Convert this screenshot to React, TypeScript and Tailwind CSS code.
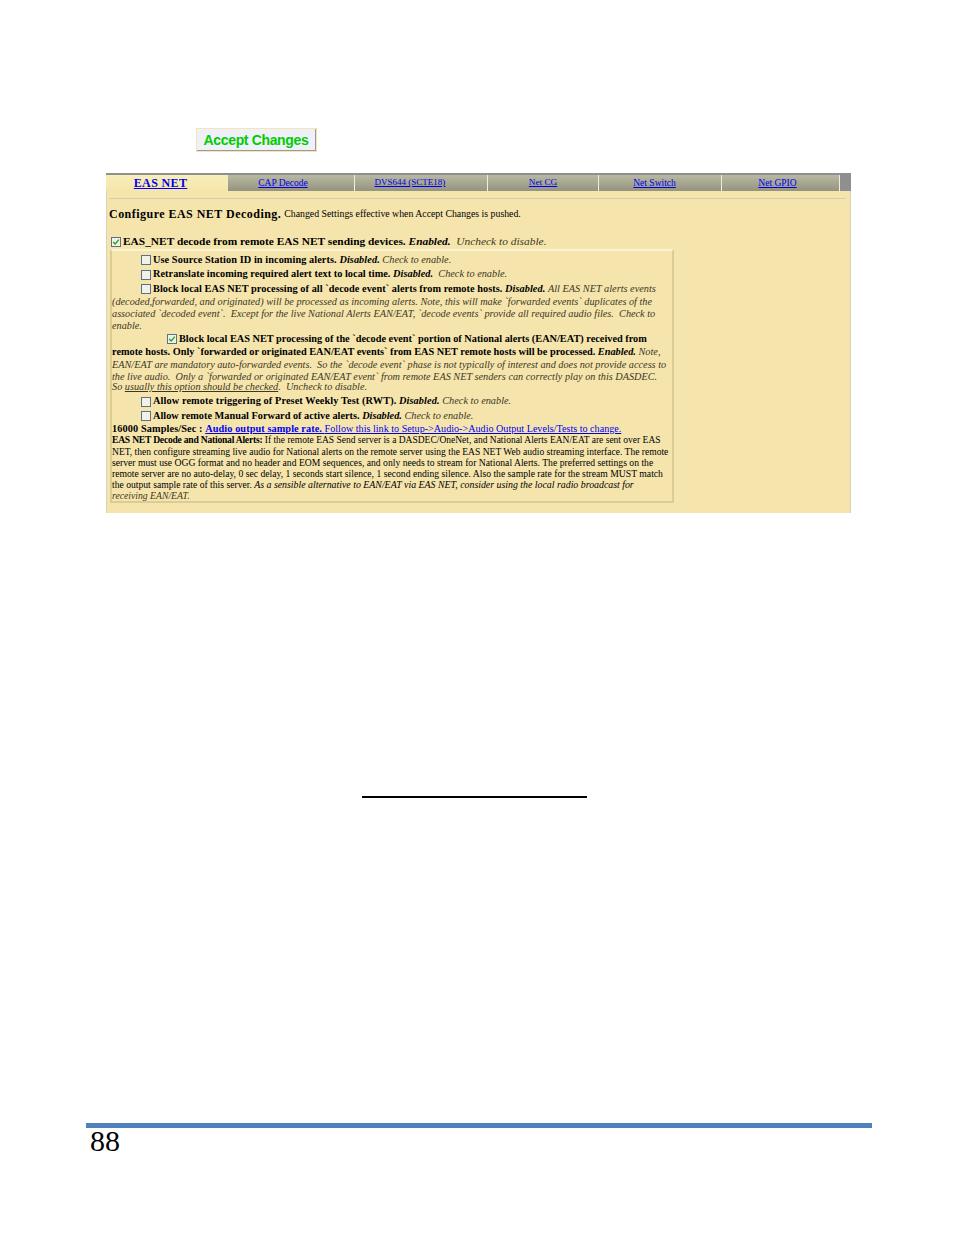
import React from 'react';

const tabs = [
  { label: 'CAP Decode', className: 'w-[127px] pr-[16px] text-[9.5px]' },
  { label: 'DVS644 (SCTE18)', className: 'w-[133px] pr-[22px] text-[9px]' },
  { label: 'Net CG', className: 'w-[111px] text-[9.2px]' },
  { label: 'Net Switch', className: 'w-[123px] pr-[11px] text-[9.5px]' },
  { label: 'Net GPIO', className: 'w-[118px] pr-[6px] text-[9.5px]' },
];

const Check = ({ checked = false }: { checked?: boolean }) => (
  <span className="inline-flex h-[10px] w-[10px] shrink-0 items-center justify-center border border-[#5d7186] bg-[#f1f1ec]">
    {checked && (
      <svg viewBox="0 0 10 10" className="h-[8px] w-[8px]">
        <path d="M1.5 5 L4 7.5 L8.5 2" fill="none" stroke="#21a121" strokeWidth="1.6" />
      </svg>
    )}
  </span>
);

const Line = ({ h, className = '', children }: { h: string; className?: string; children: React.ReactNode }) => (
  <div className={`flex items-center whitespace-pre ${h} ${className}`}>
    <span>{children}</span>
  </div>
);

const CheckLine = ({ h, children, checked, indent = 'pl-[29px]' }: { h: string; children: React.ReactNode; checked?: boolean; indent?: string }) => (
  <div className={`flex items-center gap-[2px] whitespace-pre ${h} ${indent}`}>
    <Check checked={checked} />
    <span>{children}</span>
  </div>
);

const Note = ({ children }: { children: React.ReactNode }) => <i className="text-[#3d3722]">{children}</i>;

export default function App() {
  return (
    <div className="relative h-[1235px] w-[954px] overflow-hidden bg-white font-['Liberation_Serif',serif] text-black">
      <div className="pl-[196px] pt-[128px]">
        <button className="block h-[24px] w-[121px] border border-[#f5e6b0]">
          <span className="flex h-full w-full items-center justify-center border-r border-b border-[#9a9a9a] bg-[#f0f0fa] pt-[1px] font-['Liberation_Sans',sans-serif] text-[14px] font-bold tracking-[-0.35px] text-[#00cc00]">
            Accept Changes
          </span>
        </button>
      </div>

      <div className="ml-[106px] mt-[21px] w-[745px]">
        <div className="flex h-[18px] border-t-[2px] border-[#8f8f8f] bg-[#8f8f8f]">
          <div className="flex w-[122px] items-center justify-center bg-gradient-to-b from-[#f8eeb8] to-[#f5e5ad] pr-[13px] text-[12px] font-bold tracking-[0.35px] text-[#0000ee] underline">
            EAS NET
          </div>
          {tabs.map((t) => (
            <div
              key={t.label}
              className={`flex items-center justify-center border-r border-[#eeeedd] bg-gradient-to-b from-[#b9b9a3] to-[#93937f] text-[#0000ee] underline ${t.className}`}
            >
              {t.label}
            </div>
          ))}
        </div>

        <div className="h-[322px] border-x border-[#d8d3bb] bg-[#f5e5ad] px-[2px] pt-[7px]">
          <div className="w-[737px] border-t border-[#d5cdb0]" />
          <div className="mt-[8px] flex h-[14px] items-center whitespace-pre">
            <b className="text-[12px] tracking-[0.47px]">Configure EAS NET Decoding.</b>
            <span className="ml-[3px] text-[9.8px]">Changed Settings effective when Accept Changes is pushed.</span>
          </div>
          <div className="mt-[14px] flex h-[13px] items-center gap-[2px] whitespace-pre pl-[2px] text-[11.4px]">
            <Check checked />
            <span>
              <b>EAS_NET decode from remote EAS NET sending devices.</b>
              <b> <i>Enabled.</i></b> <Note> Uncheck to disable.</Note>
            </span>
          </div>

          <div className="ml-[1px] mt-[1px] h-[254px] w-[564px] border-[2px] border-t-[#faf3d2] border-l-[#d9cc96] border-r-[#d9cc96] border-b-[#d9cc96] text-[10.3px] leading-none">
            <CheckLine h="h-[14px] mt-[2px]">
              <b className="tracking-[0.07px]">Use Source Station ID in incoming alerts. <i>Disabled.</i></b> <Note>Check to enable.</Note>
            </CheckLine>
            <CheckLine h="h-[15px]">
              <b className="tracking-[0.03px]">Retranslate incoming required alert text to local time. <i>Disabled.</i></b> <Note> Check to enable.</Note>
            </CheckLine>
            <CheckLine h="h-[14px]">
              <b className="tracking-[0.05px]">Block local EAS NET processing of all `decode event` alerts from remote hosts. <i>Disabled.</i></b> <Note>All EAS NET alerts events</Note>
            </CheckLine>
            <div className="text-[10.25px]">
              <Line h="h-[12px]"><Note>(decoded,forwarded, and originated) will be processed as incoming alerts. Note, this will make `forwarded events` duplicates of the</Note></Line>
              <Line h="h-[12px]"><Note>associated `decoded event`.  Except for the live National Alerts EAN/EAT, `decode events` provide all required audio files.  Check to</Note></Line>
              <Line h="h-[12px]"><Note>enable.</Note></Line>
            </div>
            <CheckLine h="h-[14px]" checked indent="pl-[55px]">
              <b>Block local EAS NET processing of the `decode event` portion of National alerts (EAN/EAT) received from</b>
            </CheckLine>
            <Line h="h-[13px]"><b>remote hosts. Only `forwarded or originated EAN/EAT events` from EAS NET remote hosts will be processed. <i>Enabled.</i></b> <Note>Note,</Note></Line>
            <div className="text-[10.25px]">
              <Line h="h-[12px]"><Note>EAN/EAT are mandatory auto-forwarded events.  So the `decode event` phase is not typically of interest and does not provide access to</Note></Line>
              <Line h="h-[12px]"><Note>the live audio.  Only a `forwarded or originated EAN/EAT event` from remote EAS NET senders can correctly play on this DASDEC.</Note></Line>
              <Line h="h-[11px]" className="pb-[2px]"><Note>So <u>usually this option should be checked</u>.  Uncheck to disable.</Note></Line>
            </div>
            <CheckLine h="h-[15px]">
              <b className="tracking-[0.1px]">Allow remote triggering of Preset Weekly Test (RWT). <i>Disabled.</i></b> <Note>Check to enable.</Note>
            </CheckLine>
            <CheckLine h="h-[14px]">
              <b>Allow remote Manual Forward of active alerts. <i>Disabled.</i></b> <Note>Check to enable.</Note>
            </CheckLine>
            <Line h="h-[12px]">
              <b className="tracking-[0.1px]">16000 Samples/Sec : </b>
              <a className="text-[#0000ee] underline"><b className="tracking-[0.07px]">Audio output sample rate.</b> <span className="text-[10.13px]">Follow this link to Setup-&gt;Audio-&gt;Audio Output Levels/Tests to change.</span></a>
            </Line>
            <Line h="h-[11px]" className="text-[9.5px]"><b className="text-[9.6px] tracking-[-0.23px]">EAS NET Decode and National Alerts:</b> If the remote EAS Send server is a DASDEC/OneNet, and National Alerts EAN/EAT are sent over EAS</Line>
            <Line h="h-[11px]" className="text-[9.56px]">NET, then configure streaming live audio for National alerts on the remote server using the EAS NET Web audio streaming interface. The remote</Line>
            <Line h="h-[11px]" className="text-[9.66px]">server must use OGG format and no header and EOM sequences, and only needs to stream for National Alerts. The preferred settings on the</Line>
            <Line h="h-[11px]" className="text-[9.67px]">remote server are no auto-delay, 0 sec delay, 1 seconds start silence, 1 second ending silence. Also the sample rate for the stream MUST match</Line>
            <Line h="h-[11px]" className="text-[9.65px]">the output sample rate of this server. <i className="text-[9.86px]">As a sensible alternative to EAN/EAT via EAS NET, consider using the local radio broadcast for</i></Line>
            <Line h="h-[11px]" className="text-[9.7px]"><Note>receiving EAN/EAT.</Note></Line>
          </div>
        </div>
      </div>

      <div className="ml-[362px] mt-[283px] h-[2px] w-[225px] bg-black" />

      <div className="ml-[86px] mt-[325px] w-[786px]">
        <div className="h-[5px] bg-[#4f81bd]" />
        <div className="pl-[4px] text-[30px] leading-[26px]">88</div>
      </div>
    </div>
  );
}
